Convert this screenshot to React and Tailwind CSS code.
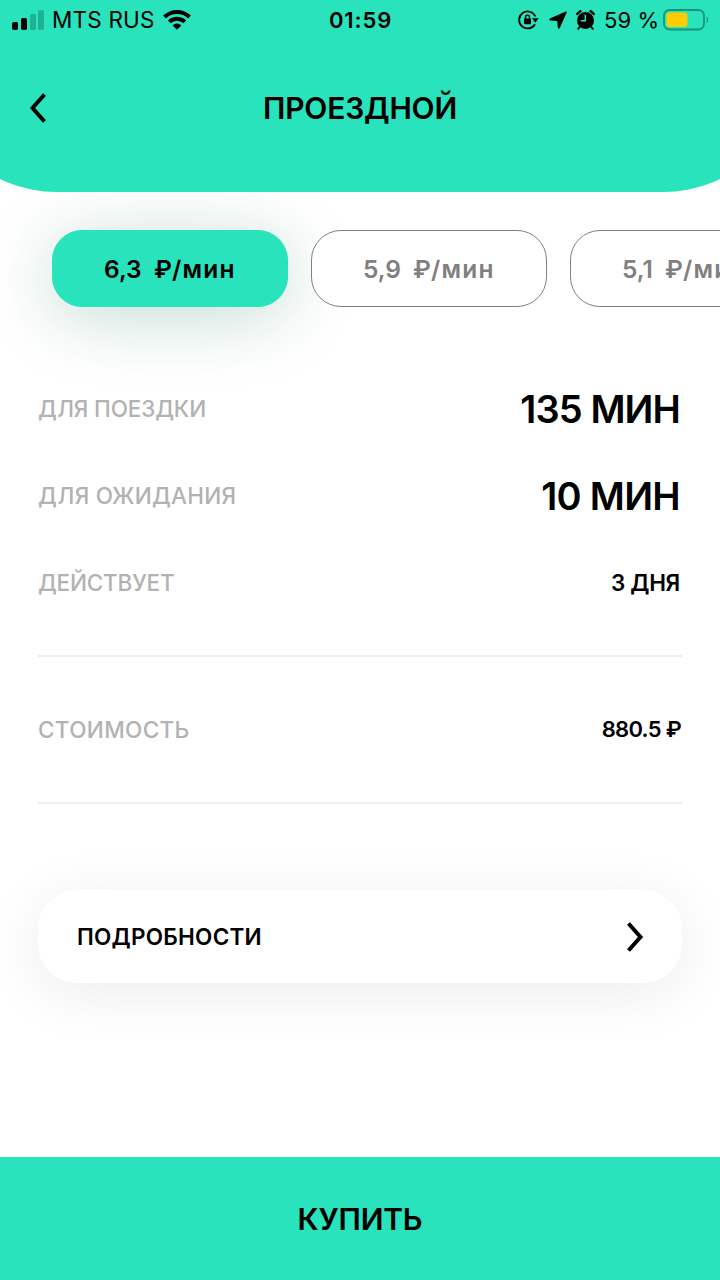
import React, { useState } from 'react'

const tariffs = [
    { id: 1, price: "6,3", space: "w-[50px]" },
    { id: 2, price: "5,9", space: "w-[50px]" },
    { id: 3, price: "5,1", space: "w-[43px]" },
]

const StatusBar = () => {
    return (
        <div className="grid h-10 grid-cols-[1fr_auto_1fr] items-center pl-3 pr-[11px] text-[22px] leading-10">
            <div className="flex items-center">
                <svg width="32" height="20" viewBox="0 0 32 20">
                    <rect x="0" y="12" width="6" height="8" rx="1.8" />
                    <rect x="9" y="8" width="6" height="12" rx="1.8" />
                    <rect x="18" y="4" width="6" height="16" rx="1.8" opacity="0.22" />
                    <rect x="26" y="0" width="6" height="20" rx="1.8" opacity="0.22" />
                </svg>
                <span className="ml-2 w-[103px] whitespace-nowrap text-[22.5px] tracking-[0.2px]">MTS RUS</span>
                <svg className="ml-2" width="28" height="22" viewBox="0 0 28 22" fill="none" stroke="black">
                    <path d="M1.5 8a18 18 0 0 1 25 0" strokeWidth="4" />
                    <path d="M6.2 12.9a11.2 11.2 0 0 1 15.6 0" strokeWidth="4" />
                    <path d="M14 20.8l-4.4-4.4a6.2 6.2 0 0 1 8.8 0z" fill="black" stroke="none" />
                </svg>
            </div>
            <span className="font-semibold tracking-[0.9px]">01:59</span>
            <div className="flex items-center justify-end">
                <svg width="21" height="20" viewBox="0 0 21 20" fill="none" stroke="black" strokeWidth="1.8">
                    <path d="M17.4 6.5A8.5 8.5 0 1 0 17 14.2" />
                    <path d="M14 8.2h6.6l-3.3 4.6z" fill="black" stroke="none" />
                    <rect x="6" y="8.4" width="7" height="5.8" rx="1" fill="black" stroke="none" />
                    <path d="M7.5 9V7.2a2 2 0 0 1 4 0V9" strokeWidth="1.4" />
                </svg>
                <svg className="ml-[10px]" width="18" height="18" viewBox="0 0 18 18">
                    <path d="M16.7 .6L.9 7.6c-.9.5-.7 1.7.3 1.8l7 .5.7 6.8c.1 1.1 1.5 1.3 1.9.3L17.7 1.5c.3-.7-.3-1.2-1-.9z" />
                </svg>
                <svg className="ml-[8px]" width="20" height="20" viewBox="0 0 20 20">
                    <circle cx="10.5" cy="10.4" r="8.5" />
                    <path d="M5 16.5l-1.8 2.3M16 16.5l1.8 2.3" stroke="black" strokeWidth="2" strokeLinecap="round" />
                    <path d="M2.4 3.9l3-2.6M18.6 3.9l-3-2.6" stroke="black" strokeWidth="2.6" strokeLinecap="round" />
                    <path d="M2.3 5.7l4.4-3.9M18.7 5.7l-4.4-3.9" stroke="#28E3BB" strokeWidth="0.6" />
                    <path d="M10.3 4.8v6H5.800" stroke="#28E3BB" strokeWidth="1.5" fill="none" />
                </svg>
                <span className="ml-[9px] w-[55px] whitespace-nowrap tracking-[0.1px]">59 %</span>
                <svg className="ml-[4px]" width="46" height="22" viewBox="0 0 46 22">
                    <rect x="1" y="1" width="40" height="19.5" rx="5.5" fill="none" stroke="#169478" strokeWidth="1.8" />
                    <rect x="3.5" y="3.5" width="21" height="14.5" rx="3" fill="#FFCC00" />
                    <path d="M43.6 7.3c2 1.5 2 5.5 0 7z" fill="#169478" />
                </svg>
            </div>
        </div>
    )
}

const Row = ({ label, children }) => {
    return (
        <div className="flex h-[87px] items-center justify-between">
            {label}
            {children}
        </div>
    )
}

const App = () => {
    const [selected, setSelected] = useState(1);

    return (
        <div className="flex h-[1280px] w-[720px] flex-col overflow-hidden bg-white font-['Inter',sans-serif] text-black">
            {/* the header is wider than the screen so only part of the round corners is visible */}
            <header className="relative z-10 -mx-[75px] h-48 shrink-0 rounded-b-[132px] bg-[#28E3BB] px-[75px]">
                <StatusBar />
                <div className="grid h-[136px] grid-cols-[80px_1fr_80px] items-center">
                    <button className="pl-[29px]">
                        <svg width="18" height="30" viewBox="0 0 18 30" fill="none" stroke="black" strokeWidth="4">
                            <path d="M15.5 1.5L3.5 15l12 13.5" />
                        </svg>
                    </button>
                    <h1 className="text-center text-[30px] font-semibold tracking-[-0.2px]">ПРОЕЗДНОЙ</h1>
                </div>
            </header>

            <div className="mt-[38px] flex shrink-0 gap-[23px] pl-[52px]">
                {tariffs.map((tariff) => (
                    <button
                        key={tariff.id}
                        onClick={() => setSelected(tariff.id)}
                        className={`flex h-[77px] w-[236px] shrink-0 items-center whitespace-nowrap rounded-[30px] border pl-[51px] pt-0.5 text-[24.5px] ${selected === tariff.id
                            ? "border-[#28E3BB] bg-[#28E3BB] font-semibold tracking-[1.2px] shadow-[0_10px_70px_rgba(0,110,75,0.24)]"
                            : "border-[#808080] bg-white font-semibold tracking-[1.2px] text-[#808080]"}`}
                    >
                        <span className={`${tariff.space} text-left tracking-normal`}>{tariff.price}</span>
                        <span>₽/мин</span>
                    </button>
                ))}
            </div>

            <main className="flex flex-1 flex-col px-[38px] pt-[58px]">
                <Row label={<span className="text-[22.5px] font-medium tracking-[-0.15px] text-[#b2b2b2]">ДЛЯ ПОЕЗДКИ</span>}>
                    <span className="pr-0.5 pt-0.5 text-[38px] font-semibold tracking-[-0.9px]">135 МИН</span>
                </Row>
                <Row label={<span className="text-[22.5px] font-medium tracking-[0.25px] text-[#b2b2b2]">ДЛЯ ОЖИДАНИЯ</span>}>
                    <span className="pr-0.5 pt-0.5 text-[38px] font-semibold tracking-[-0.7px]">10 МИН</span>
                </Row>
                <Row label={<span className="text-[22.5px] font-medium tracking-[-0.2px] text-[#b2b2b2]">ДЕЙСТВУЕТ</span>}>
                    <span className="pr-0.5 text-[22.5px] font-semibold tracking-[-0.3px]">3 ДНЯ</span>
                </Row>
                <div className="mt-[29px] flex h-[149px] items-center justify-between border-y-2 border-[#efefef]">
                    <span className="text-[22.5px] font-medium tracking-[0.35px] text-[#b2b2b2]">СТОИМОСТЬ</span>
                    <span className="pr-px text-[22px] font-semibold tracking-[-0.7px]">880.5 ₽</span>
                </div>
                <button className="mt-[86px] flex h-[93px] items-center justify-between rounded-[38px] bg-white pl-[39px] pr-[38px] shadow-[0_10px_60px_rgba(0,0,0,0.08)]">
                    <span className="text-[22.5px] font-semibold tracking-[0.25px]">ПОДРОБНОСТИ</span>
                    <svg width="18" height="30" viewBox="0 0 18 30" fill="none" stroke="black" strokeWidth="4">
                        <path d="M2.5 1.5L14.5 15l-12 13.5" />
                    </svg>
                </button>
            </main>

            <button className="h-[123px] shrink-0 bg-[#28E3BB] pt-0.5 text-[30px] font-semibold tracking-[-0.2px]">КУПИТЬ</button>
        </div>
    )
}

export default App
